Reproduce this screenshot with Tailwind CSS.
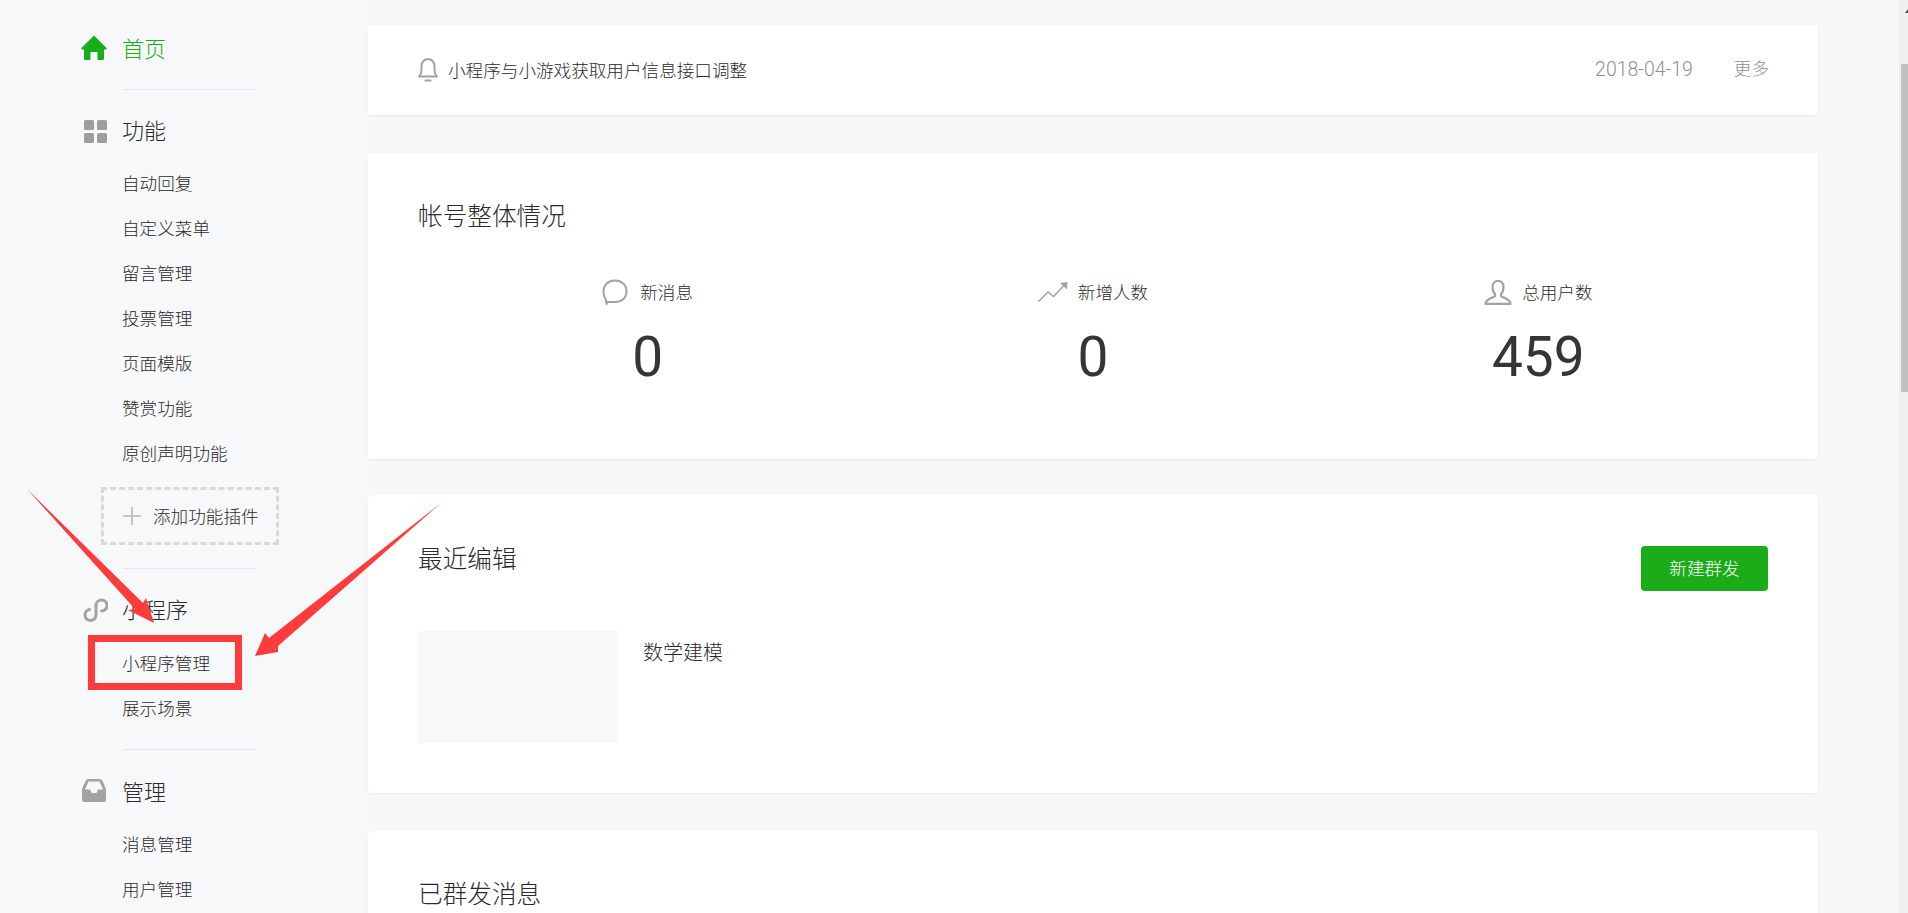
<!DOCTYPE html>
<html lang="zh-CN">
<head>
<meta charset="utf-8">
<script src="https://cdn.jsdelivr.net/npm/@tailwindcss/browser@4"></script>
<title>首页</title>
</head>
<body class="m-0">
<div class="relative flex h-[913px] w-[1908px] overflow-hidden bg-[#f6f7f9] font-['Noto_Sans_CJK_SC','Noto_Sans',sans-serif] font-light text-[#2b2b2b]">

  <!-- Sidebar -->
  <aside class="w-[368px] shrink-0 bg-[#f7f8fa] text-[17.6px]">
    <div class="relative mt-[23px] ml-[122px] flex h-[48px] items-center text-[22px] text-[#1aad19]">
      <svg class="absolute left-[-41px] top-[12px] h-[25px] w-[26px]" viewBox="0 0 26 25"><path fill="#1aad19" d="M13 0.5 L25.6 13 Q26.3 14.5 24.5 14.5 L23 14.5 L23 23.5 Q23 25 21.5 25 L16.5 25 L16.5 17 L9.5 17 L9.5 25 L4.5 25 Q3 25 3 23.5 L3 14.5 L1.5 14.5 Q-0.3 14.5 0.4 13 Z"/></svg>
      首页
    </div>
    <div class="mt-[18px] ml-[123px] h-px w-[134px] bg-[#e7e7eb]"></div>

    <div class="relative mt-[17px] ml-[122px] flex h-[44px] items-center text-[22px]">
      <svg class="absolute left-[-38px] top-[13px] h-[23px] w-[23px]" viewBox="0 0 23 23" fill="#9e9e9e"><rect width="10" height="10" rx="1.5"/><rect x="13" width="10" height="10" rx="1.5"/><rect y="13" width="10" height="10" rx="1.5"/><rect x="13" y="13" width="10" height="10" rx="1.5"/></svg>
      功能
    </div>
    <ul class="mt-[10px] ml-[122px]">
      <li class="flex h-[45px] items-center">自动回复</li>
      <li class="flex h-[45px] items-center">自定义菜单</li>
      <li class="flex h-[45px] items-center">留言管理</li>
      <li class="flex h-[45px] items-center">投票管理</li>
      <li class="flex h-[45px] items-center">页面模版</li>
      <li class="flex h-[45px] items-center">赞赏功能</li>
      <li class="flex h-[45px] items-center">原创声明功能</li>
    </ul>
    <div class="mt-[11px] ml-[101px] flex h-[58px] w-[178px] items-center gap-[12px] border-[3px] border-dashed border-[#d9dadc] pl-[19px]">
      <svg class="h-[18px] w-[18px]" viewBox="0 0 18 18"><path stroke="#b8b8b8" stroke-width="1.6" d="M9 0V18M0 9H18"/></svg>
      <span class="whitespace-nowrap">添加功能插件</span>
    </div>
    <div class="mt-[23px] ml-[123px] h-px w-[134px] bg-[#e7e7eb]"></div>

    <div class="relative mt-[17px] ml-[122px] flex h-[44px] items-center text-[22px]">
      <svg class="absolute left-[-40px] top-[12px] h-[25px] w-[26px]" viewBox="0 0 26 25" fill="none" stroke="#a3a3a3" stroke-width="3" stroke-linecap="round"><path d="M14 7.5 A5.5 5.5 0 1 1 19.5 13"/><path d="M14 7.5 V16.5 A5.5 5.5 0 1 1 7.500 11.500"/></svg>
      小程序
    </div>
    <ul class="mt-[11px] ml-[122px]">
      <li class="flex h-[45px] items-center">小程序管理</li>
      <li class="flex h-[45px] items-center">展示场景</li>
    </ul>
    <div class="mt-[18px] ml-[123px] h-px w-[134px] bg-[#e7e7eb]"></div>

    <div class="relative mt-[18px] ml-[122px] flex h-[44px] items-center text-[22px]">
      <svg class="absolute left-[-40px] top-[11px] h-[23px] w-[24px]" viewBox="0 0 24 23"><path fill="#a3a3a3" fill-rule="evenodd" d="M6 0H18Q19.5 0 20.3 1.5L24 10V21Q24 23 22 23H2Q0 23 0 21V10L3.700 1.500Q4.500 0 6 0ZM6.500 2.500 L3 10.500H8L9.500 14H14.500L16 10.500H21L17.500 2.500Z"/></svg>
      管理
    </div>
    <ul class="mt-[10px] ml-[122px]">
      <li class="flex h-[45px] items-center">消息管理</li>
      <li class="flex h-[45px] items-center">用户管理</li>
    </ul>
  </aside>

  <!-- Main -->
  <main class="flex w-[1450px] shrink-0 flex-col pt-[25px]">
    <section class="flex h-[90px] shrink-0 items-center rounded-[4px] bg-white pr-[49px] pl-[50px] text-[17.6px] shadow-[0_1px_2px_rgba(150,150,150,0.12)]">
      <svg class="h-[24px] w-[20px]" viewBox="0 0 20 24" fill="none" stroke="#a3a3a3" stroke-width="2"><path d="M1 18.500C3 17 3.500 14.500 3.500 11V8A6.500 7 0 0 1 16.500 8V11C16.500 14.500 17 17 19 18.500Z" stroke-linejoin="round"/><path d="M6.500 22.500H13.500"/></svg>
      <span class="ml-[10px]">小程序与小游戏获取用户信息接口调整</span>
      <span class="ml-auto font-['Roboto',sans-serif] text-[19.5px] text-[#8f8f8f]">2018-04-19</span>
      <span class="mb-[3px] ml-[41px] text-[#8f8f8f]">更多</span>
    </section>

    <section class="mt-[38px] h-[306px] shrink-0 rounded-[4px] bg-white shadow-[0_1px_2px_rgba(150,150,150,0.12)]">
      <h2 class="pt-[42px] pl-[50px] text-[24.64px] leading-[38px] font-light">帐号整体情况</h2>
      <div class="mt-[44px] grid grid-cols-3 px-[57px]">
        <div class="flex flex-col items-center">
          <div class="flex h-[30px] items-center gap-[12px] text-[17.6px]">
            <svg class="h-[26px] w-[26px]" viewBox="0 0 26 26" fill="none" stroke="#a3a3a3" stroke-width="2"><path d="M13 1.500C19.500 1.500 24.500 6 24.500 12.500S19.500 23 13 23H5.500L4.500 25 L3.800 20.500C2.200 18.500 1.500 15.500 1.500 12.500C1.500 6 6.500 1.500 13 1.500Z" stroke-linejoin="round"/></svg>
            <span>新消息</span>
          </div>
          <div class="mt-[17px] font-['Roboto',sans-serif] text-[55px] leading-[66px] font-normal text-[#353535]">0</div>
        </div>
        <div class="flex flex-col items-center">
          <div class="flex h-[30px] items-center gap-[10px] text-[17.6px]">
            <svg class="h-[20px] w-[30px]" viewBox="0 0 30 20" fill="none" stroke="#a3a3a3" stroke-width="1.500"><path d="M0.500 19.500L10 10L15.500 14.500L27 2.500"/><path fill="#a3a3a3" stroke="none" d="M22 1L29.500 0L29 7.500Z"/></svg>
            <span>新增人数</span>
          </div>
          <div class="mt-[17px] font-['Roboto',sans-serif] text-[55px] leading-[66px] font-normal text-[#353535]">0</div>
        </div>
        <div class="flex flex-col items-center">
          <div class="flex h-[30px] items-center gap-[10px] text-[17.6px]">
            <svg class="h-[25px] w-[28px]" viewBox="0 0 28 25" fill="none" stroke="#a3a3a3" stroke-width="2.200"><path d="M14 1C10.500 1 8.500 3.500 8.500 7.500C8.500 10.500 9.500 12.500 11 14V16C9 18 1.500 19 1.500 23.900H26.500C26.500 19 19 18 17 16V14C18.500 12.500 19.500 10.500 19.500 7.500C19.500 3.500 17.500 1 14 1Z" stroke-linejoin="round"/></svg>
            <span>总用户数</span>
          </div>
          <div class="mt-[17px] font-['Roboto',sans-serif] text-[55px] leading-[66px] font-normal text-[#353535]">459</div>
        </div>
      </div>
    </section>

    <section class="mt-[36px] h-[298px] shrink-0 rounded-[4px] bg-white pr-[50px] pl-[50px] shadow-[0_1px_2px_rgba(150,150,150,0.12)]">
      <div class="flex items-start justify-between pt-[43px]">
        <h2 class="text-[24.64px] leading-[38px] font-light">最近编辑</h2>
        <button class="mt-[8px] h-[45px] w-[127px] rounded-[4px] bg-[#1aad19] text-[17.6px] font-light text-white">新建群发</button>
      </div>
      <div class="mt-[40px] flex">
        <div class="h-[112px] w-[200px] bg-[#f6f8f9]"></div>
        <div class="mt-[6px] ml-[25px] text-[20px] leading-[30px]">数学建模</div>
      </div>
    </section>

    <section class="mt-[38px] h-[200px] shrink-0 rounded-t-[4px] bg-white pl-[50px] shadow-[0_1px_2px_rgba(150,150,150,0.12)]">
      <h2 class="pt-[42px] text-[24.64px] leading-[38px] font-light">已群发消息</h2>
    </section>
  </main>

  <div class="w-[81px] shrink-0"></div>

  <!-- Scrollbar -->
  <div class="flex w-[9px] shrink-0 flex-col bg-[#f0f0f0]">
    <svg class="mt-[9px] ml-[6px] h-[4px] w-[3px]" viewBox="0 0 3 4"><path fill="#505050" d="M0 4L3 0V4Z"/></svg>
    <div class="mt-[51px] ml-[2px] h-[328px] w-[7px] bg-[#c1c1c1]"></div>
  </div>

  <!-- Annotation overlay -->
  <svg class="pointer-events-none absolute top-0 left-0 h-[913px] w-[1908px]" viewBox="0 0 1908 913">
    <rect x="91.500" y="638.500" width="147" height="48" fill="none" stroke="#ff3b3b" stroke-width="7"/>
    <polygon fill="#ff3b3b" points="27,489 143,603 146,598 154,623 128,610 135,609"/>
    <polygon fill="#ff3b3b" points="441,503 278,646 278,652 255,656 265,633 269,638"/>
  </svg>
</div>
</body>
</html>
